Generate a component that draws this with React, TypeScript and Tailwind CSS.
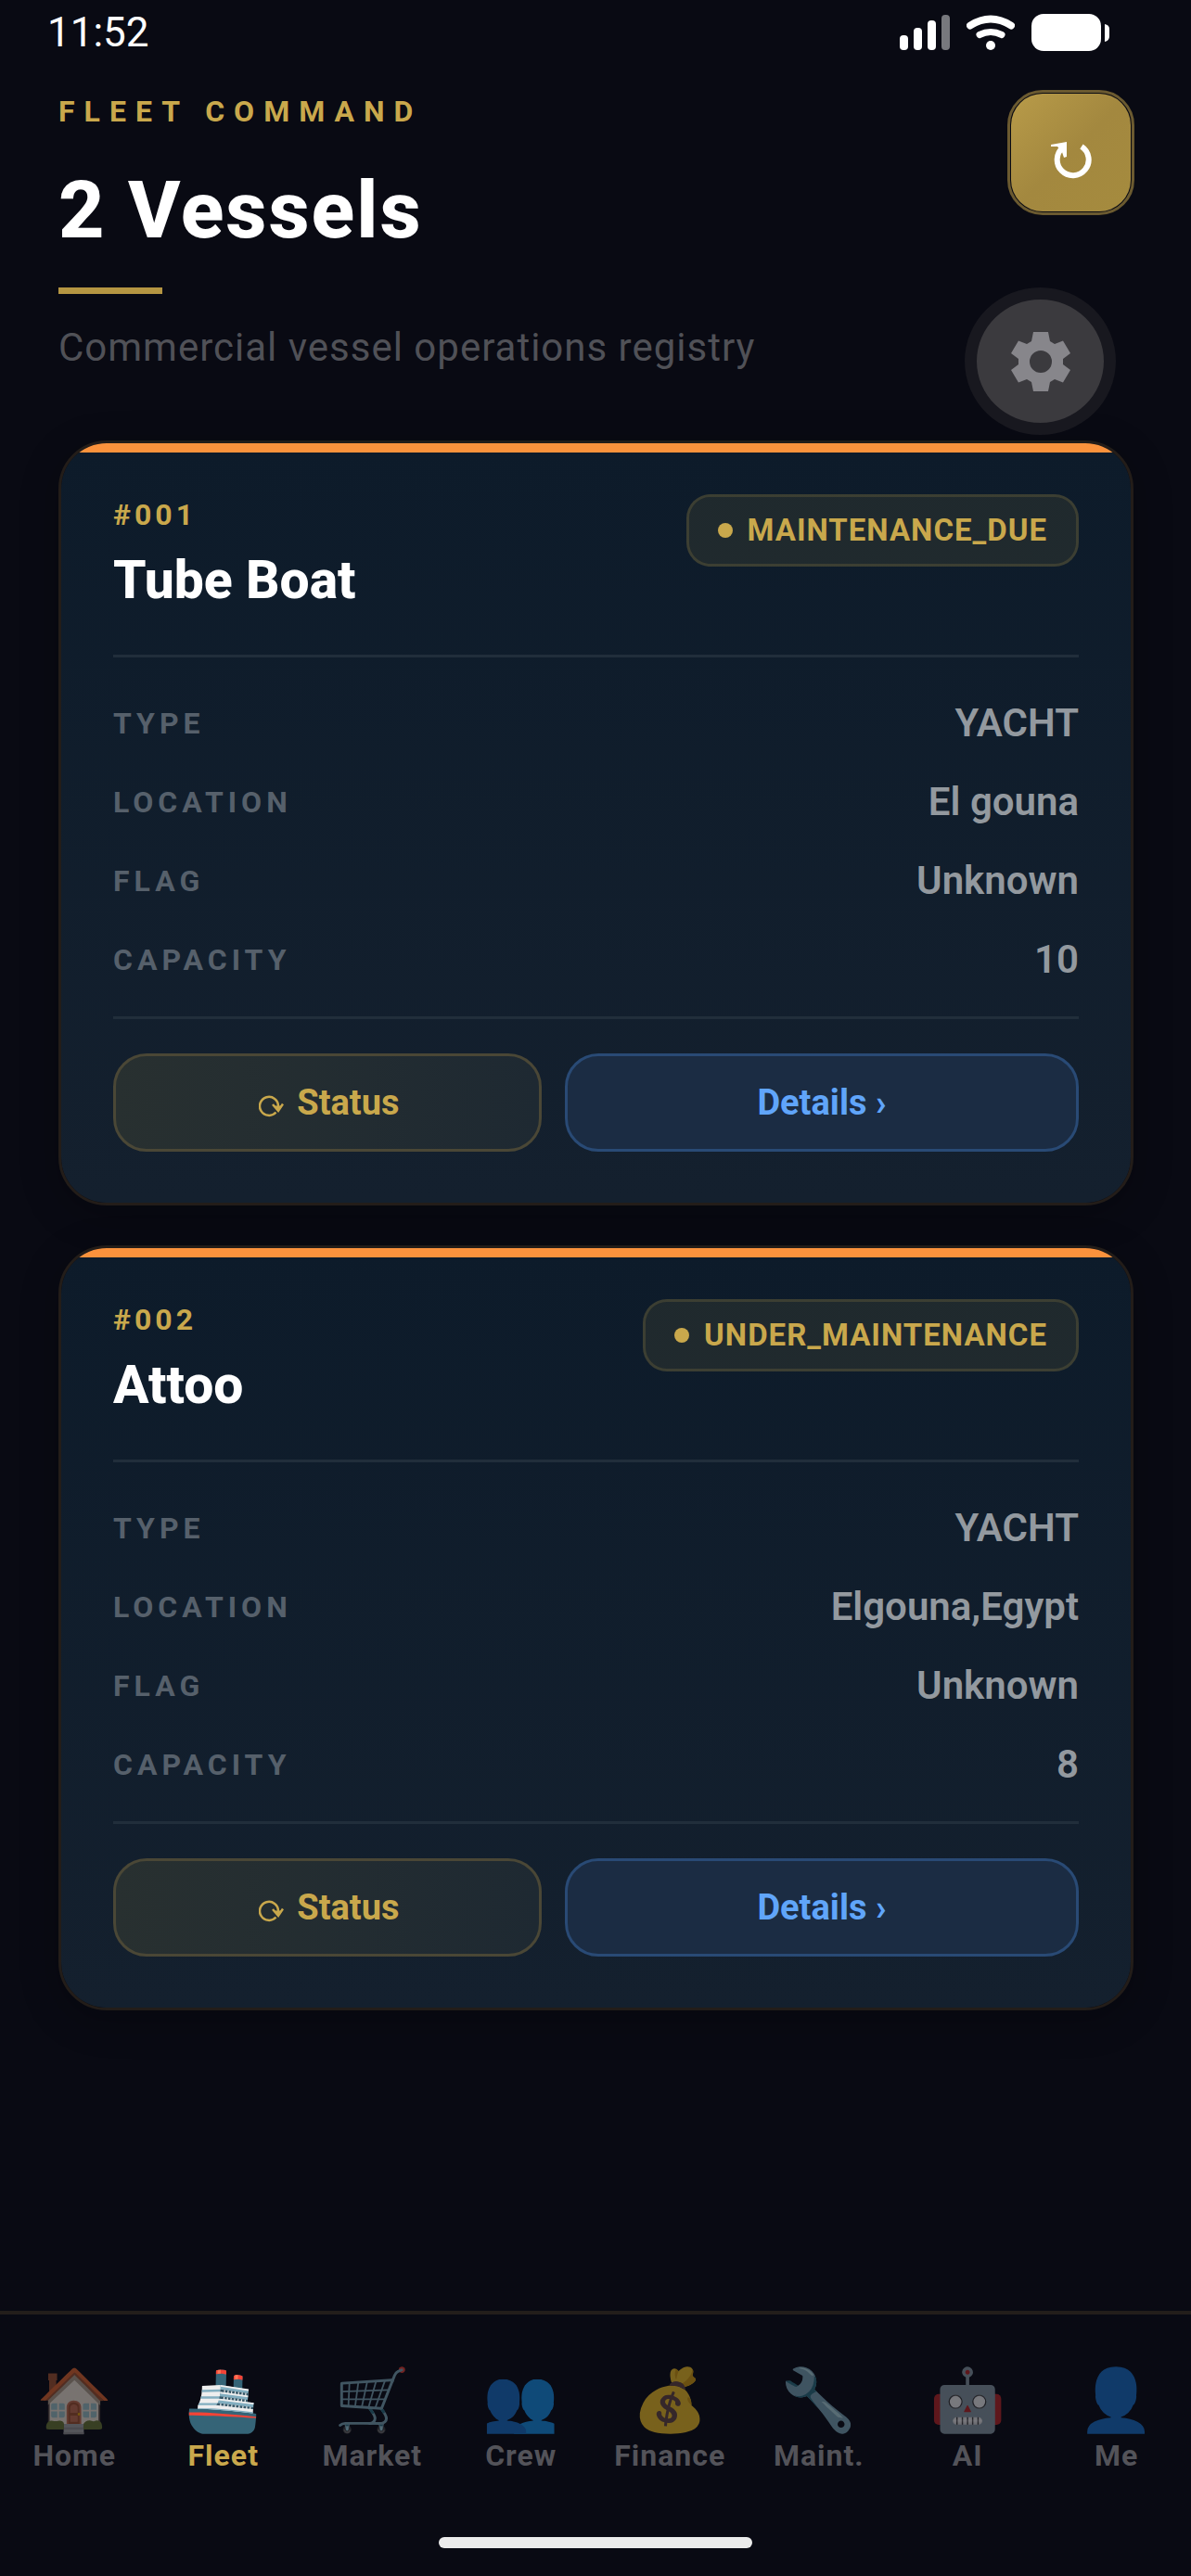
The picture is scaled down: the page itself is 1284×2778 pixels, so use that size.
import type { ReactNode } from "react";

type Vessel = {
  id: string;
  name: string;
  status: string;
  type: string;
  location: string;
  flag: string;
  capacity: number;
};

const vessels: Vessel[] = [
  { id: "#001", name: "Tube Boat", status: "MAINTENANCE_DUE", type: "YACHT", location: "El gouna", flag: "Unknown", capacity: 10 },
  { id: "#002", name: "Attoo", status: "UNDER_MAINTENANCE", type: "YACHT", location: "Elgouna,Egypt", flag: "Unknown", capacity: 8 },
];

const tabs = [
  { icon: "🏠", label: "Home" },
  { icon: "🚢", label: "Fleet" },
  { icon: "🛒", label: "Market" },
  { icon: "👥", label: "Crew" },
  { icon: "💰", label: "Finance" },
  { icon: "🔧", label: "Maint." },
  { icon: "🤖", label: "AI" },
  { icon: "👤", label: "Me" },
];

function StatusBar() {
  return (
    <div className="flex h-[70px] items-center justify-between pr-[88px] pl-[51px]">
      <span className="text-[44px] leading-[52px]">11:52</span>
      <div className="flex items-center gap-[18px]">
        <svg className="h-[38px] w-[54px]" viewBox="0 0 54 38" fill="#fff">
          <rect x="0" y="22" width="9" height="16" rx="4" />
          <rect x="15" y="14" width="9" height="24" rx="4" />
          <rect x="30" y="6" width="9" height="32" rx="4" />
          <rect x="45" y="0" width="9" height="38" rx="4" opacity="0.45" />
        </svg>
        <svg className="h-[38px] w-[52px]" viewBox="0 0 52 38" fill="none" stroke="#fff" strokeLinecap="round">
          <path d="M4 11.5Q26 -2.5 48 11.5" strokeWidth="8" />
          <path d="M14 21.500Q26 15.500 38 21.500" strokeWidth="7" />
          <circle cx="26" cy="33" r="5" fill="#fff" stroke="none" />
        </svg>
        <svg className="h-10 w-[84px]" viewBox="0 0 84 40" fill="#fff">
          <rect width="75" height="40" rx="13" />
          <path d="M79 11q5 1 5 5v8q0 5-5 6z" />
        </svg>
      </div>
    </div>
  );
}

function RefreshIcon() {
  return (
    <svg className="mt-4 h-[42px] w-[44px]" viewBox="0 0 44 42" fill="none">
      <path d="M33 6A17 17 0 1 1 13 7" stroke="#fff" strokeWidth="6" />
      <path d="M0 4 17 1V17L14 18 12 12 7 6H0z" fill="#fff" />
    </svg>
  );
}

function GearIcon() {
  return (
    <svg className="h-16 w-16" viewBox="0 0 64 64" fill="#87868b" fillRule="evenodd">
      <path d="M24 0H40L42 10 47 13 56 9.500 64 23 56 29V35L64 41 56 54.500 47 51 42 54 40 64H24L22 54 17 51 8 54.500 0 41 8 35V29L0 23 8 9.500 17 13 22 10zM32 20a12 12 0 1 0 0 24a12 12 0 1 0 0-24z" />
    </svg>
  );
}

function CycleIcon() {
  return (
    <svg className="mt-2 h-[26px] w-[27px]" viewBox="0 0 27 24" fill="none" stroke="#c9a84c" strokeWidth="2.500">
      <path d="M18.500 18.500A10 10 0 1 1 21 12" />
      <path d="M15 10 21 17 26 9.500" />
      <path d="M17 12H24L21 16z" fill="#c9a84c" strokeWidth="1" />
    </svg>
  );
}

function Row({ label, children }: { label: string; children: ReactNode }) {
  return (
    <div className="flex items-center justify-between">
      <dt className="text-[32px] leading-[48px] font-bold tracking-[5px] text-[#56606b]">{label}</dt>
      <dd className="text-[42px] leading-[48px] font-semibold text-[#93999f]">{children}</dd>
    </div>
  );
}

function VesselCard({ vessel }: { vessel: Vessel }) {
  return (
    <article className="overflow-hidden rounded-[52px] border-3 border-[#231d19] bg-linear-to-b from-[#0d1b2a] to-[#14202e] bg-clip-padding shadow-[0_10px_40px_rgba(0,0,0,0.25)]">
      <div className="h-[10px] bg-[#fb923c]" />
      <div className="px-14 pt-[45px] pb-[55px]">
        <div className="flex items-start justify-between pb-[47px]">
          <div>
            <p className="text-[32px] leading-[44px] font-bold tracking-[4px] text-[#c9a84c]">{vessel.id}</p>
            <h2 className="mt-4 text-[57px] leading-[66px] font-extrabold">{vessel.name}</h2>
          </div>
          <span className="flex h-[78px] items-center gap-4 rounded-[26px] border-3 border-[#c9a84c]/25 bg-[#c9a84c]/10 bg-clip-padding px-[31px] text-[33px] font-bold tracking-[1px] text-[#c9a84c]">
            <i className="size-4 rounded-full bg-[#c9a84c]" />
            {vessel.status}
          </span>
        </div>

        <dl className="flex flex-col gap-[37px] border-y-3 border-[#212e3b] pt-[47px] pb-[37px]">
          <Row label="TYPE">{vessel.type}</Row>
          <Row label="LOCATION">{vessel.location}</Row>
          <Row label="FLAG">{vessel.flag}</Row>
          <Row label="CAPACITY">{vessel.capacity}</Row>
        </dl>

        <div className="mt-[37px] grid grid-cols-[5fr_6fr] gap-[25px] text-[38px] font-bold">
          <button className="flex h-[106px] items-center justify-center gap-[14px] rounded-[36px] border-3 border-[#4a4736] bg-linear-to-r from-[#283030] to-[#1e2932] pl-1 text-[#c9a84c]">
            <CycleIcon />
            Status
          </button>
          <button className="h-[106px] rounded-[36px] border-3 border-[#294a75] bg-[#1b2c43] text-[#60a5fa]">Details ›</button>
        </div>
      </div>
    </article>
  );
}

function TabBar() {
  return (
    <nav className="mt-auto border-t-4 border-[#231e1b] pt-[55px] pb-[30px]">
      <div className="grid grid-cols-8">
        {tabs.map((t) => {
          const active = t.label === "Fleet";
          return (
            <button key={t.label} className="flex flex-col items-center gap-[2px]">
              <span className={`font-['Noto_Color_Emoji'] text-[66px] leading-[75px] ${active ? "" : "opacity-45"}`}>{t.icon}</span>
              <span className={`text-[32px] leading-[40px] font-bold tracking-[1px] ${active ? "text-[#c9a84c]" : "text-[#535359]"}`}>
                {t.label}
              </span>
            </button>
          );
        })}
      </div>
      <div className="mx-auto mt-[68px] h-3 w-[338px] rounded-full bg-[#ebebeb]" />
    </nav>
  );
}

export default function App() {
  return (
    <div className="relative flex min-h-screen flex-col bg-[#090a13] font-['Roboto',sans-serif] text-white">
      <StatusBar />

      <header className="flex items-start justify-between pt-[27px] pr-[61px] pl-[63px]">
        <div>
          <p className="text-[32px] leading-[46px] font-bold tracking-[10px] text-[#c9a84c]">FLEET COMMAND</p>
          <h1 className="mt-8 text-[86px] leading-[104px] font-extrabold tracking-[2px]">2 Vessels</h1>
          <div className="mt-[31px] h-[7px] w-28 bg-[#b59642]" />
          <p className="mt-[34px] text-[42px] leading-[48px] tracking-[1px] text-[#505157]">Commercial vessel operations registry</p>
        </div>
        <button aria-label="Refresh" className="h-[135px] w-[137px] rounded-[38px] border-3 border-[#6b5a30] p-px">
          <span className="flex size-full items-center justify-center rounded-[34px] bg-linear-to-br from-[#b89b49] via-[#a3883f] to-[#a58b3e]">
            <RefreshIcon />
          </span>
        </button>
      </header>

      <button
        aria-label="Settings"
        className="absolute top-[310px] right-[81px] flex h-[159px] w-[163px] items-center justify-center rounded-[50%] border-13 border-[#18181f] bg-[#3b3a3e]"
      >
        <GearIcon />
      </button>

      <main className="flex flex-col gap-[43px] pt-[76px] pr-[62px] pb-10 pl-[63px]">
        {vessels.map((v) => (
          <VesselCard key={v.id} vessel={v} />
        ))}
      </main>

      <TabBar />
    </div>
  );
}
